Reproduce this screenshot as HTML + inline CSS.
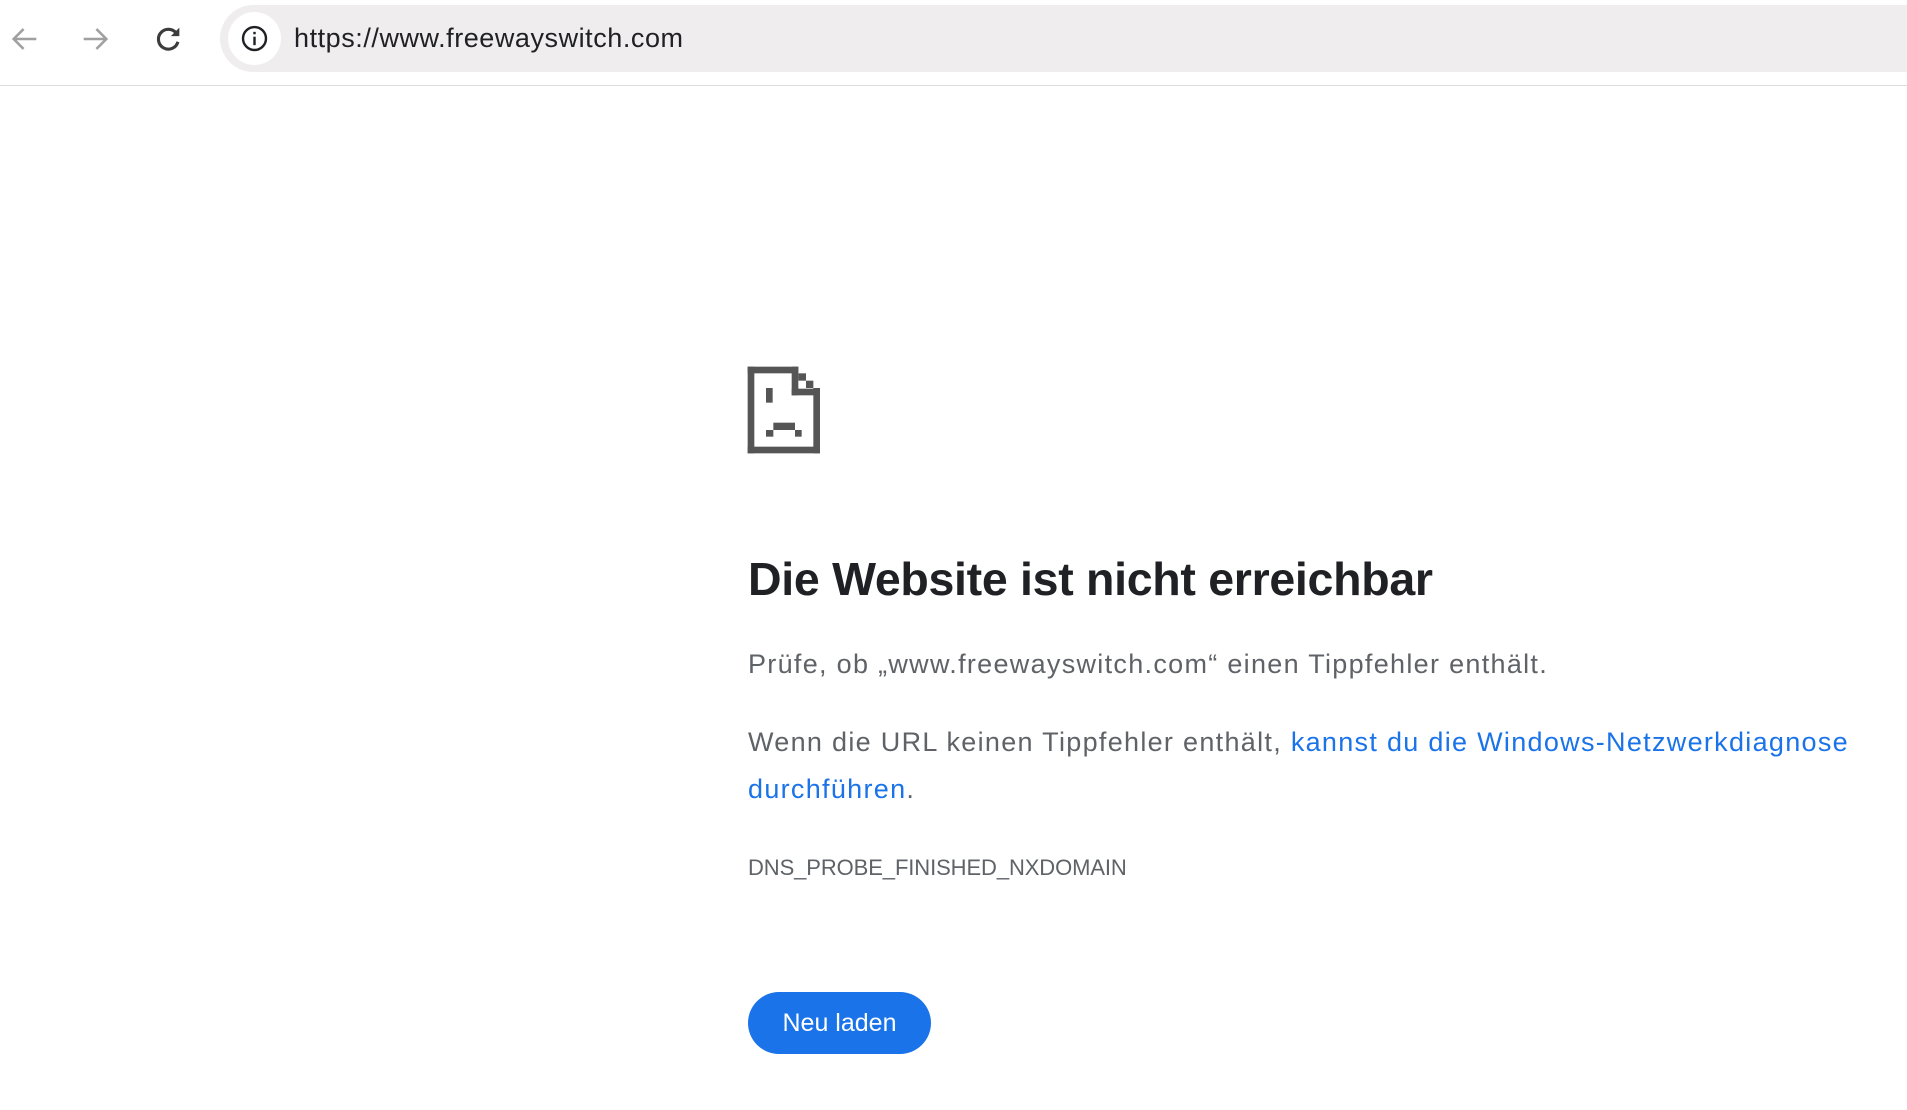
<!DOCTYPE html>
<html><head><meta charset="utf-8"><style>
body{margin:0;width:1907px;height:1110px;background:#fff;font-family:"Liberation Sans",sans-serif;position:relative;overflow:hidden}
.bar{position:absolute;left:0;top:0;width:1907px;height:85px;border-bottom:1px solid #dcdcdc;background:#fff}
.pill{position:absolute;left:220px;top:5px;width:1720px;height:67px;border-radius:34px;background:#efedee}
.info{position:absolute;left:228px;top:12px;width:53px;height:53px;border-radius:50%;background:#fff}
.url{position:absolute;left:294px;top:23px;font-size:27px;color:#202124;letter-spacing:0.55px}
.t{position:absolute;left:748px;white-space:nowrap}
h1{position:absolute;left:748px;top:552px;margin:0;font-size:46.5px;font-weight:bold;color:#202124;white-space:nowrap;letter-spacing:-0.3px}
.p{font-size:27px;color:#5f6368;letter-spacing:1.3px}
a{color:#1a73e8;text-decoration:none}
.btn{position:absolute;left:748px;top:992px;width:183px;height:62px;border-radius:31px;background:#1a73e8;color:#fff;font-size:25px;text-align:center;line-height:62px}
</style></head><body>
<div class="bar">
<svg style="position:absolute;left:8px;top:22px" width="34" height="34" viewBox="0 0 24 24"><path d="M20 12H5M11 5l-7 7 7 7" fill="none" stroke="#a0a0a0" stroke-width="1.8"/></svg>
<svg style="position:absolute;left:78px;top:22px" width="34" height="34" viewBox="0 0 24 24"><path d="M4 12h15M13 5l7 7-7 7" fill="none" stroke="#a0a0a0" stroke-width="1.8"/></svg>
<svg style="position:absolute;left:151px;top:22px" width="34" height="34" viewBox="0 0 24 24"><path d="M18.5 9A7 7 0 1 0 19 14" fill="none" stroke="#3c3c3c" stroke-width="2.2"/><path d="M20 4v6h-6z" fill="#3c3c3c"/></svg>
<div class="pill"></div><div class="info"></div>
<svg style="position:absolute;left:240px;top:24px" width="29" height="29" viewBox="0 0 24 24"><circle cx="12" cy="12" r="9.5" fill="none" stroke="#202124" stroke-width="2"/><rect x="11" y="10.5" width="2" height="7" fill="#202124"/><rect x="11" y="6.5" width="2" height="2" fill="#202124"/></svg>
<div class="url">https://www.freewayswitch.com</div>
</div>
<svg style="position:absolute;left:730px;top:350px" width="120" height="120" viewBox="0 0 360 360" fill="#555">
<rect x="53" y="50" width="20" height="260"/><rect x="53" y="50" width="152" height="20"/>
<rect x="205" y="70" width="23" height="22"/><rect x="228" y="92" width="22" height="22"/>
<rect x="250" y="114" width="20" height="196"/><rect x="53" y="290" width="217" height="20"/>
<rect x="185" y="50" width="20" height="86"/><rect x="185" y="116" width="85" height="20"/>
<rect x="108" y="114" width="20" height="44"/><rect x="130" y="218" width="65" height="22"/>
<rect x="108" y="240" width="22" height="20"/><rect x="195" y="240" width="20" height="20"/>
</svg>
<h1>Die Website ist nicht erreichbar</h1>
<div class="t p" style="top:649px">Prüfe, ob „www.freewayswitch.com“ einen Tippfehler enthält.</div>
<div class="t p" style="top:727px">Wenn die URL keinen Tippfehler enthält, <a>kannst du die Windows-Netzwerkdiagnose</a></div>
<div class="t p" style="top:774px"><a>durchführen</a>.</div>
<div class="t" style="top:855px;font-size:22px;color:#5f6368;letter-spacing:-0.1px">DNS_PROBE_FINISHED_NXDOMAIN</div>
<div class="btn">Neu laden</div>
</body></html>
